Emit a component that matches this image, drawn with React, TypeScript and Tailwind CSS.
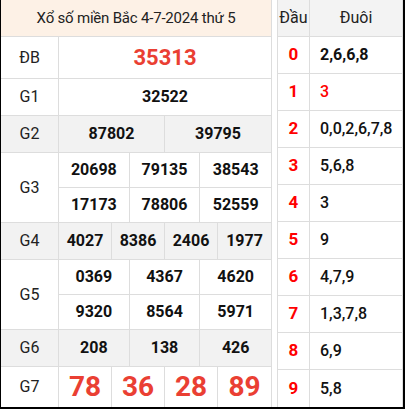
const font = { fontFamily: "Roboto, 'Liberation Sans', sans-serif" }

type Row = { label: string; nums: string[]; cols: number; gray?: boolean; h: string; kind?: "db" | "g7" | "normal" }

const rows: Row[] = [
  { label: "ĐB", nums: ["35313"], cols: 1, h: "h-[42px]", kind: "db" },
  { label: "G1", nums: ["32522"], cols: 1, h: "h-[37px]" },
  { label: "G2", nums: ["87802", "39795"], cols: 2, gray: true, h: "h-[37px]" },
  { label: "G3", nums: ["20698", "79135", "38543", "17173", "78806", "52559"], cols: 3, h: "h-[70px]" },
  { label: "G4", nums: ["4027", "8386", "2406", "1977"], cols: 4, gray: true, h: "h-[37px]" },
  { label: "G5", nums: ["0369", "4367", "4620", "9320", "8564", "5971"], cols: 3, h: "h-[70px]" },
  { label: "G6", nums: ["208", "138", "426"], cols: 3, gray: true, h: "h-[37px]" },
  { label: "G7", nums: ["78", "36", "28", "89"], cols: 4, h: "h-[40px]", kind: "g7" },
]

const gridCols: Record<number, string> = {
  1: "grid-cols-1",
  2: "grid-cols-2",
  3: "grid-cols-3",
  4: "grid-cols-4",
}

const loto = [
  { d: "0", t: "2,6,6,8", bold: true },
  { d: "1", t: "3", red: true },
  { d: "2", t: "0,0,2,6,7,8" },
  { d: "3", t: "5,6,8" },
  { d: "4", t: "3" },
  { d: "5", t: "9" },
  { d: "6", t: "4,7,9" },
  { d: "7", t: "1,3,7,8" },
  { d: "8", t: "6,9" },
  { d: "9", t: "5,8" },
]

function PrizeRow({ row, last }: { row: Row; last: boolean }) {
  const perRow = row.cols
  const lines = Math.ceil(row.nums.length / perRow)
  return (
    <div className={`flex ${row.h} ${last ? "" : "border-b"} border-[#dddddd] ${row.gray ? "bg-[#f2f2f2]" : "bg-white"}`}>
      <div className="w-[58px] shrink-0 flex items-center justify-center border-r border-[#dddddd] text-[16px] text-[#222]">
        {row.label}
      </div>
      <div className={`flex-1 grid ${gridCols[perRow]} ${lines === 2 ? "grid-rows-2" : "grid-rows-1"}`}>
        {row.nums.map((n, i) => {
          const lastCol = (i + 1) % perRow === 0
          const lastLine = i >= perRow * (lines - 1)
          let cls = "text-[16px] font-bold text-[#111]"
          if (row.kind === "db") cls = "text-[22px] font-bold text-[#ea3f33]"
          if (row.kind === "g7") cls = "text-[28px] font-bold text-[#ea3f33]"
          return (
            <div
              key={i}
              className={`flex items-center justify-center ${lastCol ? "" : "border-r"} ${lastLine ? "" : "border-b"} border-[#dddddd] ${cls}`}
            >
              {n}
            </div>
          )
        })}
      </div>
    </div>
  )
}

export default function App() {
  return (
    <div style={font} className="w-[405px] h-[409px] flex bg-white border-l border-r-2 border-b-2 border-black">
      <div className="w-[271px] flex flex-col border-r border-[#dddddd]">
        <div className="h-[37px] flex items-center justify-center bg-[#fdf1e6] border-b border-[#dddddd] text-[15px] tracking-[-0.2px] text-[#222]">
          Xổ số miền Bắc 4-7-2024 thứ 5
        </div>
        {rows.map((r, i) => (
          <PrizeRow key={r.label} row={r} last={i === rows.length - 1} />
        ))}
      </div>
      <div className="w-[5px]" />
      <div className="w-[126px] flex flex-col border-l border-r border-[#dddddd]">
        <div className="h-[37px] flex bg-[#f3f3f3] border-b border-[#dddddd] text-[16px] text-[#222]">
          <div className="w-[32px] flex items-center justify-center border-r border-[#dddddd]">Đầu</div>
          <div className="flex-1 flex items-center justify-center">Đuôi</div>
        </div>
        {loto.map((l, i) => (
          <div key={l.d} className={`h-[37px] flex ${i === loto.length - 1 ? "" : "border-b"} border-[#dddddd]`}>
            <div className="w-[32px] flex items-center justify-center border-r border-[#dddddd] text-[17px] font-bold text-[#ff0000]">
              {l.d}
            </div>
            <div
              className={`flex-1 flex items-center pl-[10px] text-[16px] ${l.bold ? "font-bold" : "font-medium"} ${l.red ? "text-[#ff0000]" : "text-[#111]"}`}
            >
              {l.t}
            </div>
          </div>
        ))}
      </div>
    </div>
  )
}
